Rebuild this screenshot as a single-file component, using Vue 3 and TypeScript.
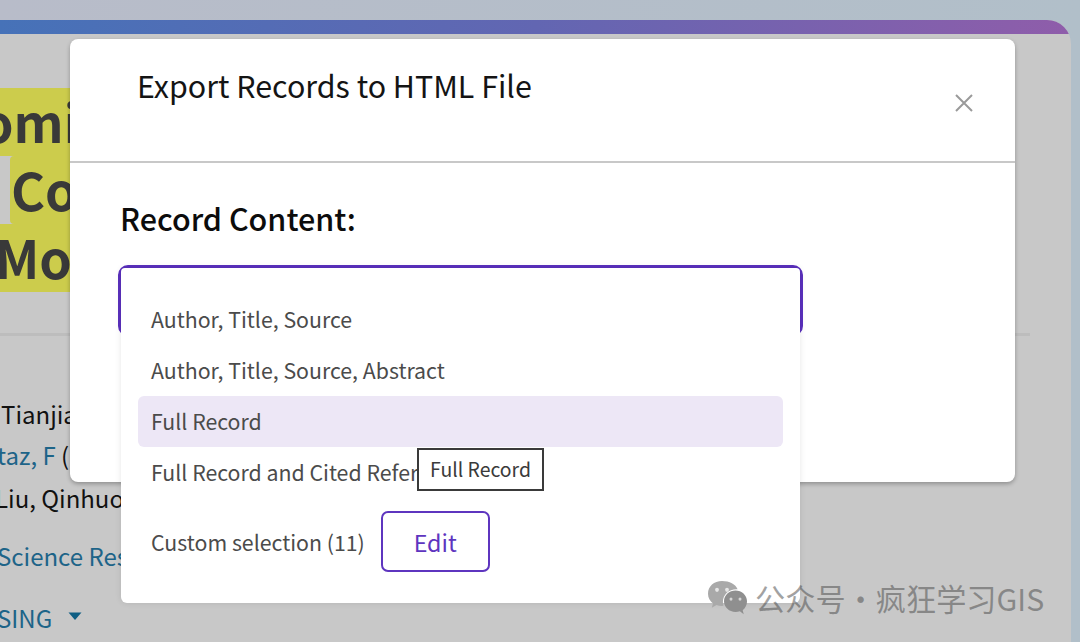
<script setup lang="ts">
const options: string[] = [
  'Author, Title, Source',
  'Author, Title, Source, Abstract',
  'Full Record',
  'Full Record and Cited References',
]
const activeOption = 'Full Record'
</script>

<template>
  <div class="screen">
    <div class="page">
      <div class="bar"></div>
      <div class="article">
        <h1 class="headline">
          <span class="hl-line first"><mark>omi</mark></span>
          <span class="hl-line second"><mark>Co</mark></span>
          <span class="hl-line third"><mark>Moc</mark></span>
        </h1>
        <div class="rule"></div>
        <p class="line tianjia">Tianjia</p>
        <p class="line link taz">taz, F <span class="plain">(</span></p>
        <p class="line liu">Liu, Qinhuo</p>
        <p class="line link science">Science Res</p>
        <p class="line link sing">
          SING
          <svg class="caret" width="14" height="9" viewBox="0 0 14 9"><path d="M0.5 0.5h13L7 8z" fill="currentColor" /></svg>
        </p>
      </div>
    </div>

    <section class="modal">
      <header class="modal-head">
        <h2 class="modal-title">Export Records to HTML File</h2>
        <svg class="close" width="18" height="18" viewBox="0 0 18 18">
          <path d="M1 1L17 17M17 1L1 17" stroke="#9a9a9a" stroke-width="2" fill="none" />
        </svg>
      </header>
      <div class="modal-body">
        <h3 class="field-label">Record Content:</h3>
        <div class="select">
          <div class="menu">
            <div
              v-for="opt in options"
              :key="opt"
              class="option"
              :class="{ active: opt === activeOption }"
            >{{ opt }}</div>
            <div class="custom">
              <span>Custom selection (11)</span>
              <button class="edit" type="button">Edit</button>
            </div>
            <div class="tooltip">Full Record</div>
          </div>
        </div>
      </div>
    </section>

    <div class="watermark">
      <svg class="wechat" width="41" height="36" viewBox="0 0 41 33" preserveAspectRatio="none">
        <path d="M15 1C7 1 1 6 1 12.500c0 3.700 2 6.800 5 9l-1.200 4 4.700-2.500c1.700.5 3.500.8 5.500.8.500 0 1 0 1.500-.1-.4-1.200-.6-2.400-.6-3.700 0-6.500 6-11.500 13.500-11.500h1.200C28.700 4 22.500 1 15 1z" fill="#a9a9a9" />
        <path d="M40 19.500C40 14 34.700 9.700 28.500 9.700S17 14 17 19.500s5.300 9.800 11.500 9.800c1.500 0 3-.3 4.400-.7l3.800 2.700-1-3.600c2.600-1.900 4.300-4.900 4.300-8.200z" fill="#8f8f8f" />
        <circle cx="10" cy="9" r="1.900" fill="#e6e6e6" />
        <circle cx="20" cy="9" r="1.900" fill="#e6e6e6" />
        <circle cx="24" cy="17.500" r="1.500" fill="#d5d5d5" />
        <circle cx="33" cy="17.500" r="1.500" fill="#d5d5d5" />
      </svg>
      <span class="wm-text">公众号·疯狂学习GIS</span>
    </div>
  </div>
</template>

<style>
html, body { margin: 0; padding: 0; }
</style>

<style scoped>
.screen {
  position: relative;
  width: 1080px;
  height: 642px;
  overflow: hidden;
  box-sizing: border-box;
  padding: 20px 9px 0 0;
  background: linear-gradient(90deg, #b8bcc9 0%, #b1bfc9 100%);
  font-family: "Noto Sans CJK SC", "Noto Sans", sans-serif;
}
.page {
  height: 622px;
  background: #c8c8c8;
  border-top-right-radius: 24px;
  overflow: hidden;
}
.bar {
  height: 14px;
  background: linear-gradient(90deg, #4672b8 0%, #6266b2 50%, #8f5daa 100%);
}
.article {
  padding-top: 54px;
  color: #111;
}
.headline {
  margin: 0;
  font-size: 52px;
  font-weight: 700;
  color: #393939;
}
.hl-line {
  display: block;
  height: 68px;
  width: 70px;
  white-space: nowrap;
  overflow: hidden;
}
.hl-line mark {
  display: block;
  height: 68px;
  line-height: 66px;
  background: #cccc4c;
  color: inherit;
}
.hl-line.first mark { text-indent: -19px; }
.hl-line.second mark { margin-left: 10px; padding-left: 1px; border-radius: 4px 0 0 4px; }
.hl-line.third mark { text-indent: -5px; }
.rule {
  height: 3px;
  width: 1030px;
  margin-top: 41px;
  background: #bdbdbd;
}
.line {
  margin: 0;
  font-size: 24px;
  line-height: 42px;
  white-space: nowrap;
}
.link { color: #1d6488; }
.plain { color: #111; }
.tianjia { margin-top: 57px; padding-left: 1px; }
.taz { margin-top: -1px; margin-left: -3px; }
.liu { margin-top: 1px; margin-left: -5px; }
.science { margin-top: 16px; margin-left: -3px; }
.sing {
  margin-top: 20px;
  margin-left: -3px;
  display: flex;
  align-items: center;
  gap: 16px;
}
.caret { color: #0f5f84; margin-top: -4px; }

.modal {
  position: absolute;
  left: 70px;
  top: 39px;
  width: 945px;
  height: 443px;
  background: #fff;
  border-radius: 8px;
  box-shadow: 0 2px 4px rgba(0, 0, 0, .28);
}
.modal-head {
  display: flex;
  justify-content: space-between;
  height: 124px;
  box-sizing: border-box;
  padding: 23px 42px 0 67px;
  border-bottom: 2px solid #c8c8c8;
}
.modal-title {
  margin: 0;
  font-size: 30.4px;
  font-weight: 400;
  line-height: 46px;
  color: #141414;
}
.close { margin-top: 32px; }
.modal-body {
  padding: 33px 0 0 48px;
}
.field-label {
  margin: 0 0 25px 2px;
  font-size: 30.5px;
  font-weight: 500;
  line-height: 44px;
  color: #0c0c0c;
}
.select {
  position: relative;
  width: 685px;
  height: 71px;
  box-sizing: border-box;
  border: 3px solid #5a30bd;
  border-radius: 10px;
}
.menu {
  position: absolute;
  left: 0;
  top: 0;
  width: 679px;
  height: 335px;
  box-sizing: border-box;
  padding: 26px 17px 0;
  background: #fff;
  border-radius: 4px 4px 6px 6px;
  box-shadow: 0 0 6px rgba(0, 0, 0, .1);
}
.option {
  height: 51px;
  line-height: 49px;
  padding-left: 13px;
  font-size: 21.3px;
  color: #4b4b4b;
  white-space: nowrap;
  border-radius: 6px;
}
.option.active {
  background: #ede7f6;
}
.custom {
  display: flex;
  align-items: center;
  gap: 16px;
  margin-top: 13px;
  padding-left: 13px;
  font-size: 21.3px;
  color: #4b4b4b;
}
.edit {
  width: 109px;
  height: 61px;
  box-sizing: border-box;
  background: #fff;
  border: 2px solid #5e35bf;
  border-radius: 7px;
  color: #5e35bf;
  font: inherit;
  font-size: 23.3px;
  padding: 0;
}
.tooltip {
  position: absolute;
  left: 296px;
  top: 180px;
  width: 127px;
  height: 43px;
  box-sizing: border-box;
  border: 2px solid #3a3a3a;
  background: #fff;
  color: #3a3a3a;
  font-size: 19.4px;
  line-height: 37px;
  text-align: center;
}
.watermark {
  position: absolute;
  left: 707px;
  top: 580px;
  display: flex;
  align-items: flex-start;
  gap: 7px;
}
.wm-text {
  font-size: 30.2px;
  line-height: 36px;
  color: rgba(70, 70, 70, .5);
  white-space: nowrap;
}
</style>
